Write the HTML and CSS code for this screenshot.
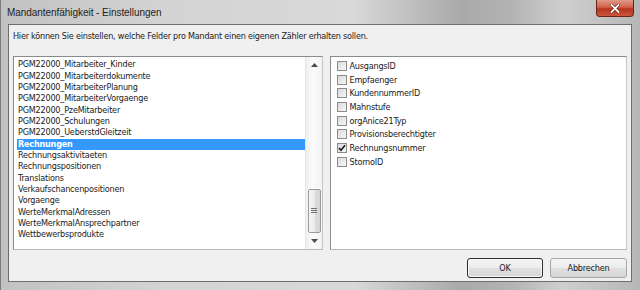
FILE: index.html
```html
<!DOCTYPE html>
<html lang="de">
<head>
    <meta charset="UTF-8">
    <title>Mandantenfähigkeit - Einstellungen</title>
    <link rel="stylesheet" href="styles.css">
</head>
<body>
<div class="window">
    <div class="titlebar">
        <span class="title">Mandantenfähigkeit - Einstellungen</span>
        <button class="close" title="Schließen">
            <svg width="10" height="9" viewBox="0 0 10 9">
                <path d="M1.5 1 L8.5 8 M8.5 1 L1.5 8" stroke="#5a140c" stroke-width="3" stroke-linecap="square"/>
                <path d="M1.5 1 L8.5 8 M8.5 1 L1.5 8" stroke="#fff" stroke-width="1.8" stroke-linecap="square"/>
            </svg>
        </button>
    </div>

    <div class="client">
        <p class="hint">Hier können Sie einstellen, welche Felder pro Mandant einen eigenen Zähler erhalten sollen.</p>

        <div class="lists">
            <div class="listbox tables">
                <ul class="items">
                    <li>PGM22000_Mitarbeiter_Kinder</li>
                    <li>PGM22000_Mitarbeiterdokumente</li>
                    <li>PGM22000_MitarbeiterPlanung</li>
                    <li>PGM22000_MitarbeiterVorgaenge</li>
                    <li>PGM22000_PzeMitarbeiter</li>
                    <li>PGM22000_Schulungen</li>
                    <li>PGM22000_UeberstdGleitzeit</li>
                    <li class="selected">Rechnungen</li>
                    <li>Rechnungsaktivitaeten</li>
                    <li>Rechnungspositionen</li>
                    <li>Translations</li>
                    <li>Verkaufschancenpositionen</li>
                    <li>Vorgaenge</li>
                    <li>WerteMerkmalAdressen</li>
                    <li>WerteMerkmalAnsprechpartner</li>
                    <li>Wettbewerbsprodukte</li>
                </ul>
                <div class="scrollbar">
                    <div class="arrow">
                        <svg width="7" height="4" viewBox="0 0 7 4"><path d="M0 4 L3.5 0 L7 4 Z" fill="#4a4a4a"/></svg>
                    </div>
                    <div class="track">
                        <div class="thumb">
                            <svg width="6" height="6" viewBox="0 0 6 6">
                                <path d="M0 0.5 H6 M0 2.5 H6 M0 4.5 H6" stroke="#6f6f6f" stroke-width="1"/>
                            </svg>
                        </div>
                    </div>
                    <div class="arrow">
                        <svg width="7" height="4" viewBox="0 0 7 4"><path d="M0 0 L3.5 4 L7 0 Z" fill="#4a4a4a"/></svg>
                    </div>
                </div>
            </div>

            <div class="listbox fields">
                <label class="check"><span class="box"></span>AusgangsID</label>
                <label class="check"><span class="box"></span>Empfaenger</label>
                <label class="check"><span class="box"></span>KundennummerID</label>
                <label class="check"><span class="box"></span>Mahnstufe</label>
                <label class="check"><span class="box"></span>orgAnice21Typ</label>
                <label class="check"><span class="box"></span>Provisionsberechtigter</label>
                <label class="check"><span class="box checked">
                    <svg width="8" height="8" viewBox="0 0 8 8"><path d="M1 4 L3 6.3 L7 1.2" stroke="#1c1c1c" stroke-width="1.6" fill="none"/></svg>
                </span>Rechnungsnummer</label>
                <label class="check"><span class="box"></span>StornoID</label>
            </div>
        </div>

        <div class="buttons">
            <button class="btn default">OK</button>
            <button class="btn cancel">Abbrechen</button>
        </div>
    </div>
</div>
</body>
</html>
```

FILE: styles.css
```css
body {
    margin: 0;
    font-family: "DejaVu Sans Condensed", "Liberation Sans", Arial, sans-serif;
    color: #1a1a1a;
    background-color: #b8b8b8;
}

.window {
    width: 640px;
    height: 290px;
    box-sizing: border-box;
    padding: 0 8px 8px 7px;
    display: flex;
    flex-direction: column;
    border-left: 1px solid #7c7c7c;
    background: linear-gradient(90deg, #c2c2c2 0%, #d3d3d3 25%, #d9d9d9 55%, #a9a9a9 72%, #b4b4b4 80%, #cfcfcf 88%, #b6b6b6 100%);
}

.titlebar {
    height: 24px;
    display: flex;
    align-items: center;
}

.title {
    font-family: "Liberation Sans", Arial, sans-serif;
    font-size: 10px;
    letter-spacing: -0.05px;
    color: #1e1e1e;
    margin-left: -1px;
}

.close {
    margin-left: auto;
    margin-right: -2px;
    align-self: flex-start;
    width: 38px;
    height: 17px;
    padding: 0;
    display: flex;
    align-items: center;
    justify-content: center;
    border: 1px solid #6c2418;
    border-top: none;
    border-radius: 0 0 4px 4px;
    background: linear-gradient(#e09a88 0%, #d0604a 45%, #b8341e 55%, #c9573e 100%);
}

.client {
    flex: 1;
    box-sizing: border-box;
    border: 1px solid #6e6e6e;
    background-color: #f0f0f0;
    padding: 0 4px;
    display: flex;
    flex-direction: column;
}

.hint {
    margin: 0;
    padding-top: 5px;
    font-size: 9px;
    letter-spacing: -0.22px;
    line-height: 12px;
}

.lists {
    margin-top: 14px;
    height: 194px;
    display: flex;
    gap: 7px;
}

.listbox {
    box-sizing: border-box;
    height: 194px;
    background-color: #fff;
    border: 1px solid;
    border-color: #8a8b8d #c6c6c6 #b9b9b9 #8a8b8d;
}

.tables {
    width: 311px;
    display: flex;
}

.items {
    flex: 1;
    list-style: none;
    margin: 0;
    padding: 2.3px 0 0 3px;
    overflow: hidden;
}

.items li {
    height: 11.33px;
    line-height: 11.33px;
    padding-left: 1px;
    font-size: 9px;
    letter-spacing: -0.2px;
    white-space: nowrap;
}

.items li.selected {
    background-color: #3399ff;
    color: #fff;
    font-weight: bold;
}

.scrollbar {
    width: 16px;
    display: flex;
    flex-direction: column;
    border-left: 1px solid #e6e6e6;
    background: linear-gradient(90deg, #efefef, #fbfbfb 40%, #f3f3f3);
}

.arrow {
    height: 16px;
    display: flex;
    align-items: center;
    justify-content: center;
}

.track {
    flex: 1;
    display: flex;
    flex-direction: column;
    justify-content: flex-end;
    align-items: center;
}

.thumb {
    box-sizing: border-box;
    width: 13px;
    height: 44px;
    border: 1px solid #9b9b9b;
    border-radius: 2px;
    background: linear-gradient(90deg, #f5f5f5 0%, #ececec 50%, #dcdcdc 52%, #d6d6d6 100%);
    display: flex;
    align-items: center;
    justify-content: center;
}

.fields {
    width: 297px;
    padding: 2px 0 0 6px;
}

.check {
    height: 13.7px;
    display: flex;
    align-items: center;
    gap: 2px;
    font-size: 9px;
    letter-spacing: -0.2px;
    white-space: nowrap;
}

.box {
    box-sizing: border-box;
    width: 10px;
    height: 10px;
    border: 1px solid #8b8b8b;
    background: linear-gradient(135deg, #dadada, #f7f7f7);
    display: flex;
    align-items: center;
    justify-content: center;
}

.buttons {
    margin-top: 8px;
    display: flex;
    justify-content: flex-end;
    gap: 7px;
}

.btn {
    height: 20px;
    padding: 0;
    font-family: "DejaVu Sans Condensed", "Liberation Sans", Arial, sans-serif;
    font-size: 9px;
    letter-spacing: -0.2px;
    color: #1a1a1a;
    border-radius: 3px;
    background: linear-gradient(#f4f4f4 0%, #ececec 50%, #e0e0e0 51%, #d6d6d6 100%);
}

.default {
    width: 76px;
    border: 1px solid #2e2e2e;
    box-shadow: inset 0 0 0 1px #f8f8f8;
}

.cancel {
    width: 77px;
    border: 1px solid #a6a6a6;
}
```
